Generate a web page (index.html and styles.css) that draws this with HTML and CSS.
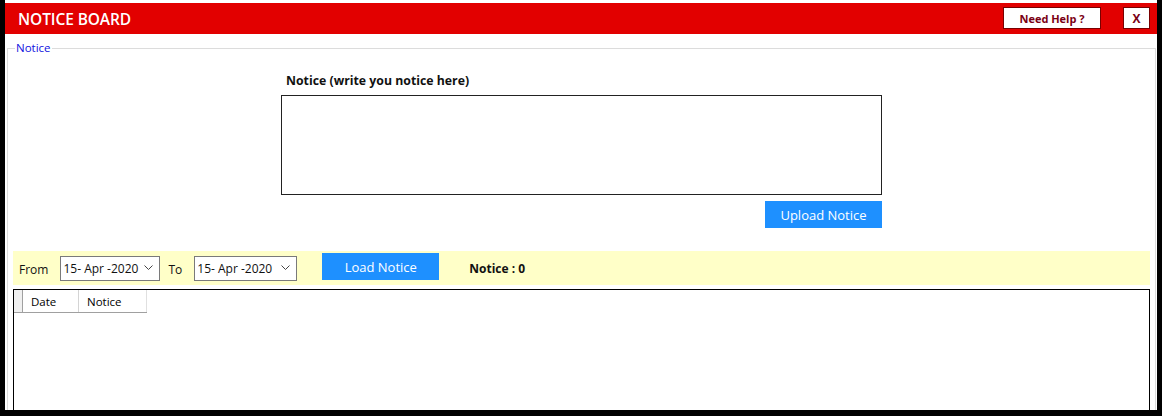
FILE: index.html
```html
<!DOCTYPE html>
<html>
<head>
<meta charset="utf-8">
<link rel="stylesheet" href="styles.css">
</head>
<body>
<div class="window">
  <div class="titlebar">
    <div class="title">NOTICE BOARD</div>
    <div class="title-actions">
      <button class="tb-btn help">Need Help ?</button>
      <button class="tb-btn close">X</button>
    </div>
  </div>
  <fieldset class="group">
    <legend>Notice</legend>
    <div class="compose">
      <div class="compose-inner">
        <div class="compose-label">Notice (write you notice here)</div>
        <div class="textarea"></div>
        <div class="upload-row"><button class="blue-btn upload">Upload Notice</button></div>
      </div>
    </div>
    <div class="filter">
      <span class="lbl from">From</span>
      <div class="select s1"><span>15- Apr -2020</span><svg class="chev" width="9" height="6" viewBox="0 0 9 6"><path d="M0.5 0.5 L4.5 4.5 L8.5 0.5" fill="none" stroke="#444" stroke-width="1"/></svg></div>
      <span class="lbl to">To</span>
      <div class="select s2"><span>15- Apr -2020</span><svg class="chev" width="9" height="6" viewBox="0 0 9 6"><path d="M0.5 0.5 L4.5 4.5 L8.5 0.5" fill="none" stroke="#444" stroke-width="1"/></svg></div>
      <button class="blue-btn load">Load Notice</button>
      <span class="count">Notice : 0</span>
    </div>
    <div class="grid">
      <div class="grid-head">
        <div class="cell rowhdr"></div>
        <div class="cell date">Date</div>
        <div class="cell notice">Notice</div>
      </div>
    </div>
  </fieldset>
</div>
</body>
</html>
```

FILE: styles.css
```css
* { box-sizing: border-box; }
html, body { margin: 0; padding: 0; }
body {
  background: #000;
  width: 1162px;
  height: 416px;
  overflow: hidden;
  padding: 0 5px 0 5px;
  font-family: "Open Sans", "Noto Sans", sans-serif;
}
.window {
  background: #fff;
  height: 410px;
  padding-top: 3px;
  overflow: hidden;
}
.titlebar {
  background: #e20000;
  height: 31px;
  display: flex;
  align-items: center;
  justify-content: space-between;
  padding: 0 7px 0 13px;
}
.title {
  color: #fff;
  font-weight: 600;
  font-size: 15.5px;
  letter-spacing: -0.1px;
}
.title-actions { display: flex; gap: 22px; align-items: center; }
.tb-btn {
  background: #fff;
  border: 1px solid #7a0000;
  color: #7a0014;
  font-family: inherit;
  font-weight: 700;
  font-size: 11px;
  height: 22px;
  padding: 0;
  margin-top: -1px;
}
.help { width: 98px; }
.close { width: 27px; font-size: 12px; }
.group {
  margin: 8px 1px 0 2px;
  padding: 0 5px 0 5px;
  border: 1px solid #dcdcdc;
  border-bottom: none;
  height: 400px;
}
.group legend {
  color: #1010e0;
  font-size: 11.5px;
  padding: 0 1px;
  margin-left: 2px;
  line-height: 12px;
}
.compose { display: flex; justify-content: center; margin-top: 18px; }
.compose-inner { width: 601px; }
.compose-label {
  font-weight: 700;
  font-size: 12.3px;
  padding-left: 5px;
  height: 17px;
  line-height: 17px;
  color: #111;
}
.textarea {
  margin-top: 6px;
  height: 100px;
  border: 1px solid #222;
}
.upload-row { display: flex; justify-content: flex-end; margin-top: 6px; }
.blue-btn {
  background: #1e90ff;
  color: #fff;
  border: none;
  font-family: inherit;
  font-size: 13px;
  width: 117px;
  padding: 0;
}
.upload { height: 27px; }
.filter {
  margin-top: 23px;
  background: #ffffc8;
  height: 34px;
  display: flex;
  align-items: center;
  font-size: 12px;
  color: #111;
}
.lbl { margin-top: 2px; }
.from { margin-left: 6px; }
.select {
  height: 25px;
  border: 1px solid #7a7a7a;
  background: #fff;
  display: flex;
  align-items: center;
  justify-content: space-between;
  padding: 0 6px 0 2px;
  font-size: 12px;
}
.s1 { width: 100px; margin-left: 12px; }
.to { margin-left: 8px; }
.s2 { width: 103px; margin-left: 12px; }
.chev { margin-top: -1px; }
.load { height: 27px; margin-left: 25px; margin-top: -3px; }
.count { margin-left: 30px; font-weight: 700; margin-top: 1px; }
.grid {
  margin-top: 4px;
  border: 1px solid #000;
  height: 140px;
}
.grid-head {
  display: flex;
  height: 23px;
  width: 133px;
  border-bottom: 1px solid #a0a0a0;
  font-size: 11.5px;
}
.cell {
  display: flex;
  align-items: center;
  border-right: 1px solid #d4d4d4;
  padding-left: 8px;
}
.rowhdr { width: 9px; padding: 0; border-right: 1px solid #a0a0a0; background: #f0f0f0; }
.date { width: 56px; }
.notice { width: 68px; border-right: 1px solid #e0e0e0; }
```
